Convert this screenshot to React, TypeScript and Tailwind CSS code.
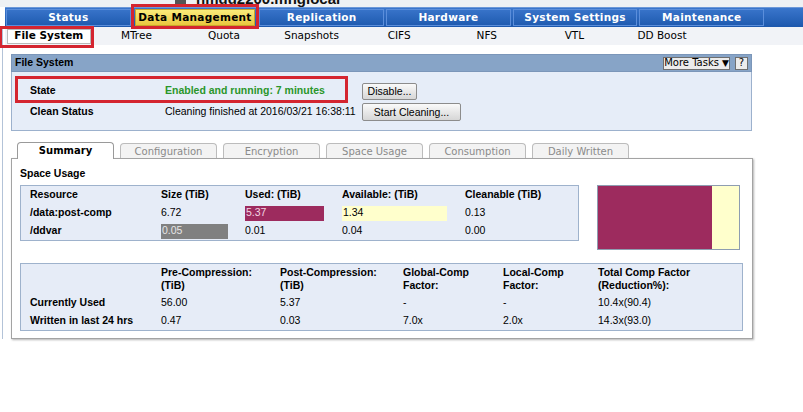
import React from "react";

const navTabs = ["Status", "Data Management", "Replication", "Hardware", "System Settings", "Maintenance"];
const subTabs = ["File System", "MTree", "Quota", "Snapshots", "CIFS", "NFS", "VTL", "DD Boost"];
const pageTabs = ["Summary", "Configuration", "Encryption", "Space Usage", "Consumption", "Daily Written"];

const verdana = "font-['DejaVu_Sans',Verdana,sans-serif]";
const arial = "font-['Liberation_Sans',Arial,sans-serif]";

function GrayButton({ label, w, h }: { label: string; w: string; h: string }) {
  return (
    <button
      className={`${w} ${h} ${arial} text-[10.5px] text-black bg-[#e6e6e6] bg-linear-to-b from-[#fafafa] to-[#d6d6d6] border border-[#8c8c8c] rounded-[2px] flex items-center justify-center leading-none`}
    >
      {label}
    </button>
  );
}

function Bar({ w, color, text, textColor }: { w: string; color: string; text: string; textColor: string }) {
  return (
    <div className={`${w} ${color} h-[15px] flex items-center`}>
      <span className={`${textColor} pl-px`}>{text}</span>
    </div>
  );
}

export default function App() {
  return (
    <div className="w-[803px] h-[412px] overflow-hidden bg-white">
      {/* window title, mostly scrolled off */}
      <div className="h-[7px] bg-[#eef1f4] overflow-hidden">
        <div className="flex items-center gap-[10px] pl-[175px] -mt-[10px]">
          <div className="w-[11px] h-[13px] bg-[#555]" />
          <span className={`${arial} font-bold text-[15px] leading-[18px] text-[#111]`}>hmdd2200.mnglocal</span>
        </div>
      </div>

      <div className="flex w-[803px]">
        {/* left rail */}
        <div className="w-[5px] shrink-0 flex justify-center">
          <div className="w-px bg-[#b3c3d8] mt-[20px]" />
        </div>

        <div className="w-[798px] shrink-0">
          {/* main nav */}
          <div className="w-[798px] h-[20px] bg-[#2561b6] bg-linear-to-b from-[#3a76cc] to-[#1c58ad] flex border-t border-[#6c98d8]">
            {navTabs.map((t) =>
              t === "Data Management" ? (
                <div key={t} className="w-[126.7px] shrink-0 h-full px-[3px] py-px relative">
                  <div className={`h-full bg-[#f2d95a] bg-linear-to-b from-[#fbec7a] to-[#e9c73c] border border-[#c9a52a] flex items-center justify-center ${verdana} font-bold text-[10.5px] tracking-[0.3px] text-black`}>
                    {t}
                  </div>
                  <div className="absolute -left-[1px] -right-[1px] -top-[4px] -bottom-[2px] border-[3px] border-[#d42530]" />
                </div>
              ) : (
                <div key={t} className="w-[126.7px] shrink-0 h-full p-px">
                  <div className={`h-full border border-[#5b8edb] flex items-center justify-center ${verdana} font-bold text-[10.5px] tracking-[0.3px] text-white`}>
                    {t}
                  </div>
                </div>
              )
            )}
          </div>

          {/* sub nav */}
          <div className="h-[18px] bg-[#f1f3f7] flex items-center">
            {subTabs.map((t) =>
              t === "File System" ? (
                <div key={t} className="w-[87.6px] shrink-0 h-full relative flex items-center px-[2px]">
                  <div className={`w-full h-[15px] bg-white border border-[#b9b9b9] flex items-center justify-center ${verdana} font-bold text-[10.5px] text-black`}>
                    {t}
                  </div>
                  <div className="absolute -left-[6px] -right-[1px] -top-[1px] -bottom-[3px] border-[3px] border-[#d42530]" />
                </div>
              ) : (
                <div key={t} className={`w-[87.6px] shrink-0 text-center ${verdana} text-[10.5px] text-black`}>
                  {t}
                </div>
              )
            )}
          </div>

          {/* File System panel */}
          <div className={`ml-[6px] mt-[9px] w-[741px] ${arial} text-[10.5px] text-black`}>
            <div className="h-[18px] bg-[#87a4c7] border border-[#7b96b9] flex items-center justify-between pl-[3px] pr-[3px]">
              <span className="font-bold">File System</span>
              <div className="flex gap-[5px]">
                <div className={`h-[13px] w-[67px] bg-[#ececec] border border-[#6f6f6f] flex items-center justify-center ${verdana} text-[10px] leading-none`}>
                  More Tasks <span className="ml-[3px] text-[9px]">▼</span>
                </div>
                <div className={`h-[13px] w-[13px] bg-[#ececec] border border-[#6f6f6f] flex items-center justify-center ${verdana} text-[10px] leading-none`}>
                  ?
                </div>
              </div>
            </div>
            <div className="h-[59px] bg-[#e6edf8] border-x border-b border-[#9cb1cd] pt-[10px] pl-[18px] relative">
              <div className="h-[18px] flex items-center">
                <span className="w-[135px] font-bold">State</span>
                <span className="w-[197px] font-bold text-[#2a962a]">Enabled and running: 7 minutes</span>
                <GrayButton label="Disable..." w="w-[55px]" h="h-[17px]" />
              </div>
              <div className="h-[18px] mt-[3px] flex items-center">
                <span className="w-[135px] font-bold">Clean Status</span>
                <span className="w-[197px]">Cleaning finished at 2016/03/21 16:38:11</span>
                <GrayButton label="Start Cleaning..." w="w-[99px]" h="h-[18px]" />
              </div>
              <div className="absolute left-[3px] top-[4px] w-[333px] h-[27px] border-[3px] border-[#d42530]" />
            </div>
          </div>

          {/* page tabs */}
          <div className="ml-[12px] mt-[10px] flex gap-[6px] items-end h-[17px]">
            {pageTabs.map((t, i) =>
              i === 0 ? (
                <div key={t} className={`w-[97px] h-[17px] bg-white border border-b-0 border-[#9a9a9a] rounded-t-[4px] flex items-center justify-center ${verdana} font-bold text-[10px] text-black relative z-10 -mb-px pb-px`}>
                  {t}
                </div>
              ) : (
                <div key={t} className={`w-[97px] h-[15px] bg-[#f3f3f3] border border-b-0 border-[#bcbcbc] rounded-t-[4px] flex items-center justify-center ${verdana} text-[10px] text-[#8a8a8a]`}>
                  {t}
                </div>
              )
            )}
          </div>

          {/* summary content */}
          <div className={`ml-[6px] w-[742px] h-[181px] border border-[#a3a3a3] shadow-[1px_1px_2px_rgba(0,0,0,0.3)] pt-[8px] pl-[8px] ${arial} text-[10.5px] text-black`}>
            <div className="h-[13px] leading-[13px] font-bold">Space Usage</div>
            <div className="mt-[5px] flex items-start">
              <div className="w-[559px] h-[56px] bg-[#e6ecf7] border border-[#9eb2cc] pl-[9px]">
                <div className="h-[18px] grid grid-cols-[131px_84px_97px_123px_1fr] items-center font-bold">
                  <span>Resource</span>
                  <span>Size (TiB)</span>
                  <span>Used: (TiB)</span>
                  <span>Available: (TiB)</span>
                  <span>Cleanable (TiB)</span>
                </div>
                <div className="h-[18px] grid grid-cols-[131px_84px_97px_123px_1fr] items-center">
                  <span className="font-bold">/data:post-comp</span>
                  <span>6.72</span>
                  <Bar w="w-[79px]" color="bg-[#9d2b5e]" text="5.37" textColor="text-[#f3d6e3]" />
                  <Bar w="w-[105px]" color="bg-[#ffffcc]" text="1.34" textColor="text-black" />
                  <span>0.13</span>
                </div>
                <div className="h-[18px] grid grid-cols-[131px_84px_97px_123px_1fr] items-center">
                  <span className="font-bold">/ddvar</span>
                  <Bar w="w-[67px]" color="bg-[#808080]" text="0.05" textColor="text-[#e6e6e6]" />
                  <span>0.01</span>
                  <span>0.04</span>
                  <span>0.00</span>
                </div>
              </div>
              <div className="ml-[18px] w-[143px] h-[65px] border border-[#8e9db1] flex">
                <div className="w-[114px] h-full bg-[#9d2b5e]" />
                <div className="flex-1 h-full bg-[#ffffcc]" />
              </div>
            </div>

            <div className="mt-[13px] w-[723px] h-[68px] bg-[#e6ecf7] border border-[#9eb2cc] pl-[9px] pt-[2px]">
              <div className="grid grid-cols-[131px_119px_123px_100px_95px_1fr] font-bold leading-[13px]">
                <span />
                <span>Pre-Compression:<br />(TiB)</span>
                <span>Post-Compression:<br />(TiB)</span>
                <span>Global-Comp<br />Factor:</span>
                <span>Local-Comp<br />Factor:</span>
                <span>Total Comp Factor<br />(Reduction%):</span>
              </div>
              <div className="mt-[2px] h-[18px] grid grid-cols-[131px_119px_123px_100px_95px_1fr] items-center">
                <span className="font-bold">Currently Used</span>
                <span>56.00</span>
                <span>5.37</span>
                <span>-</span>
                <span>-</span>
                <span>10.4x(90.4)</span>
              </div>
              <div className="h-[18px] grid grid-cols-[131px_119px_123px_100px_95px_1fr] items-center">
                <span className="font-bold">Written in last 24 hrs</span>
                <span>0.47</span>
                <span>0.03</span>
                <span>7.0x</span>
                <span>2.0x</span>
                <span>14.3x(93.0)</span>
              </div>
            </div>
          </div>
        </div>
      </div>
    </div>
  );
}
